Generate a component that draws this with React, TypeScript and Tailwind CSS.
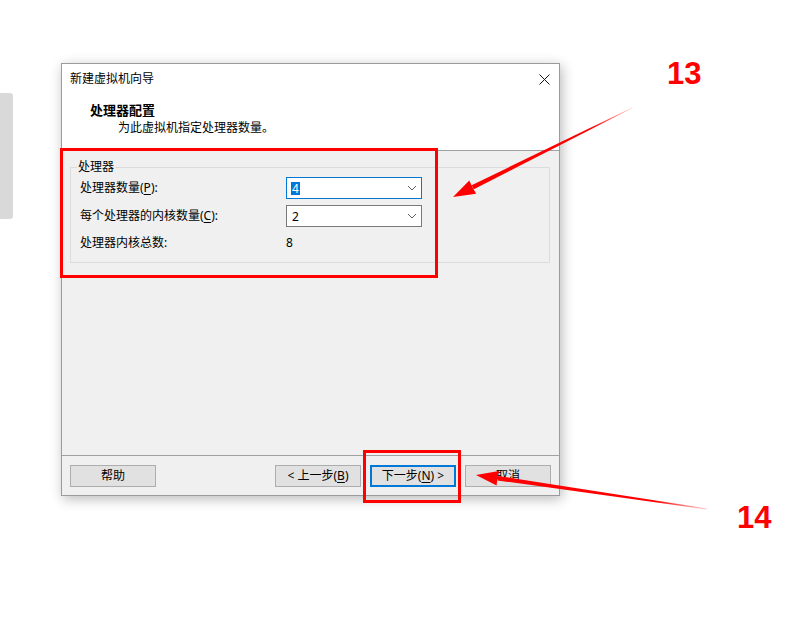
import React from 'react';

const font = { fontFamily: '"Noto Sans", "Noto Sans CJK SC", sans-serif' };

function Chevron() {
  return (
    <svg width="10" height="6" viewBox="0 0 10 6" className="shrink-0">
      <path d="M1 1 L5 5 L9 1" fill="none" stroke="#606060" strokeWidth="1" />
    </svg>
  );
}

function Combo({ value, focused }: { value: string; focused?: boolean }) {
  return (
    <div
      className={`flex h-[22px] w-[136px] items-center justify-between bg-white pl-[4px] pr-[4px] ${
        focused ? 'border border-[#0078d7]' : 'border border-[#7a7a7a]'
      }`}
    >
      <span
        className={`px-[1px] text-[12px] leading-[13px] ${
          focused ? 'bg-[#0078d7] text-white' : 'text-black'
        }`}
      >
        {value}
      </span>
      <Chevron />
    </div>
  );
}

function Btn({
  children,
  primary,
}: {
  children: React.ReactNode;
  primary?: boolean;
}) {
  return (
    <div
      className={`flex h-[22px] w-[86px] items-center justify-center bg-[#e1e1e1] text-[12px] text-black ${
        primary ? 'border-2 border-[#0078d7]' : 'border border-[#adadad]'
      }`}
    >
      {children}
    </div>
  );
}

function Arrows() {
  return (
    <svg
      className="pointer-events-none absolute left-0 top-0"
      width="801"
      height="624"
      viewBox="0 0 801 624"
    >
      <defs>
        <linearGradient id="fade13" x1="632" y1="108" x2="470" y2="188" gradientUnits="userSpaceOnUse">
          <stop offset="0" stopColor="#ff0000" stopOpacity="0.2" />
          <stop offset="0.25" stopColor="#ff0000" stopOpacity="1" />
        </linearGradient>
        <linearGradient id="fade14" x1="707" y1="509" x2="498" y2="478" gradientUnits="userSpaceOnUse">
          <stop offset="0" stopColor="#ff0000" stopOpacity="0.2" />
          <stop offset="0.25" stopColor="#ff0000" stopOpacity="1" />
        </linearGradient>
      </defs>
      {/* arrow 13 */}
      <polygon points="632.1,108.3 631.9,107.7 471.6,185.2 473.8,189.2" fill="url(#fade13)" />
      <polygon points="453,197 469.3,180.6 472.5,187.2 476.1,193.8" fill="#ff0000" />
      {/* arrow 14 */}
      <polygon points="707,509.4 707,508.6 498.2,476.0 497.4,480.4" fill="url(#fade14)" />
      <polygon points="476,475 499,471 497.4,478.2 496.6,485.5" fill="#ff0000" />
    </svg>
  );
}

export default function App() {
  return (
    <div className="relative h-[624px] w-[801px] overflow-hidden bg-white" style={font}>
      <div className="flex items-start">
        {/* side strip */}
        <div className="mt-[93px] h-[126px] w-[13px] rounded-r-[3px] bg-[#d9d9d9]" />

        {/* dialog */}
        <div className="ml-[48px] mt-[63px] flex h-[433px] w-[499px] flex-col border border-[#9b9b9b] bg-white shadow-[2px_3px_12px_rgba(0,0,0,0.28)]">
          {/* title bar */}
          <div className="flex h-[30px] items-center justify-between pl-[8px] pr-[9px]">
            <span className="text-[12px] leading-[16px] text-black">新建虚拟机向导</span>
            <svg width="11" height="11" viewBox="0 0 11 11">
              <path d="M0.5 0.5 L10.5 10.5 M10.5 0.5 L0.5 10.5" stroke="#111" strokeWidth="1" />
            </svg>
          </div>

          {/* header */}
          <div className="flex h-[57px] flex-col border-b border-[#a0a0a0] pt-[8px]">
            <div className="pl-[28px] text-[13px] font-bold leading-[16px] text-black">处理器配置</div>
            <div className="mt-[2px] pl-[56px] text-[12px] leading-[16px] text-black">
              为此虚拟机指定处理器数量。
            </div>
          </div>

          {/* content */}
          <div className="flex flex-1 flex-col bg-[#f0f0f0] pl-[8px] pr-[9px] pt-[16px]">
            <div className="relative h-[96px] border border-[#dcdcdc] pl-[9px] pt-[9px]">
              <span className="absolute left-[6px] top-[-9px] bg-[#f0f0f0] px-[1px] text-[12px] leading-[16px] text-black">
                处理器
              </span>
              <div className="flex flex-col">
                <div className="flex h-[22px] items-center">
                  <span className="w-[206px] text-[12px] leading-[16px] text-black">
                    处理器数量(<span className="underline underline-offset-2">P</span>):
                  </span>
                  <Combo value="4" focused />
                </div>
                <div className="mt-[6px] flex h-[22px] items-center">
                  <span className="w-[206px] text-[12px] leading-[16px] text-black">
                    每个处理器的内核数量(<span className="underline underline-offset-2">C</span>):
                  </span>
                  <Combo value="2" />
                </div>
                <div className="mt-[8px] flex h-[16px] items-center">
                  <span className="w-[206px] text-[12px] leading-[16px] text-black">处理器内核总数:</span>
                  <span className="text-[12px] leading-[16px] text-black">8</span>
                </div>
              </div>
            </div>
          </div>

          {/* footer */}
          <div className="flex h-[40px] items-start justify-between border-t border-[#a0a0a0] bg-[#f0f0f0] pl-[8px] pr-[8px] pt-[9px]">
            <Btn>帮助</Btn>
            <div className="flex gap-[9px]">
              <Btn>
                &lt; 上一步(<span className="underline underline-offset-2">B</span>)
              </Btn>
              <Btn primary>
                下一步(<span className="underline underline-offset-2">N</span>) &gt;
              </Btn>
              <Btn>取消</Btn>
            </div>
          </div>
        </div>
      </div>

      {/* annotation boxes */}
      <div className="absolute left-[60px] top-[148px] h-[130px] w-[378px] border-[3px] border-[#ff0000]" />
      <div className="absolute left-[363px] top-[450px] h-[53px] w-[98px] border-[3px] border-[#ff0000]" />

      <Arrows />

      {/* annotation numbers */}
      <div
        className="absolute left-[667px] top-[59px] text-[31px] font-bold leading-[30px] text-[#ff0000]"
        style={{ fontFamily: '"Liberation Sans", sans-serif' }}
      >
        13
      </div>
      <div
        className="absolute left-[737px] top-[503px] text-[31px] font-bold leading-[30px] text-[#ff0000]"
        style={{ fontFamily: '"Liberation Sans", sans-serif' }}
      >
        14
      </div>
    </div>
  );
}
